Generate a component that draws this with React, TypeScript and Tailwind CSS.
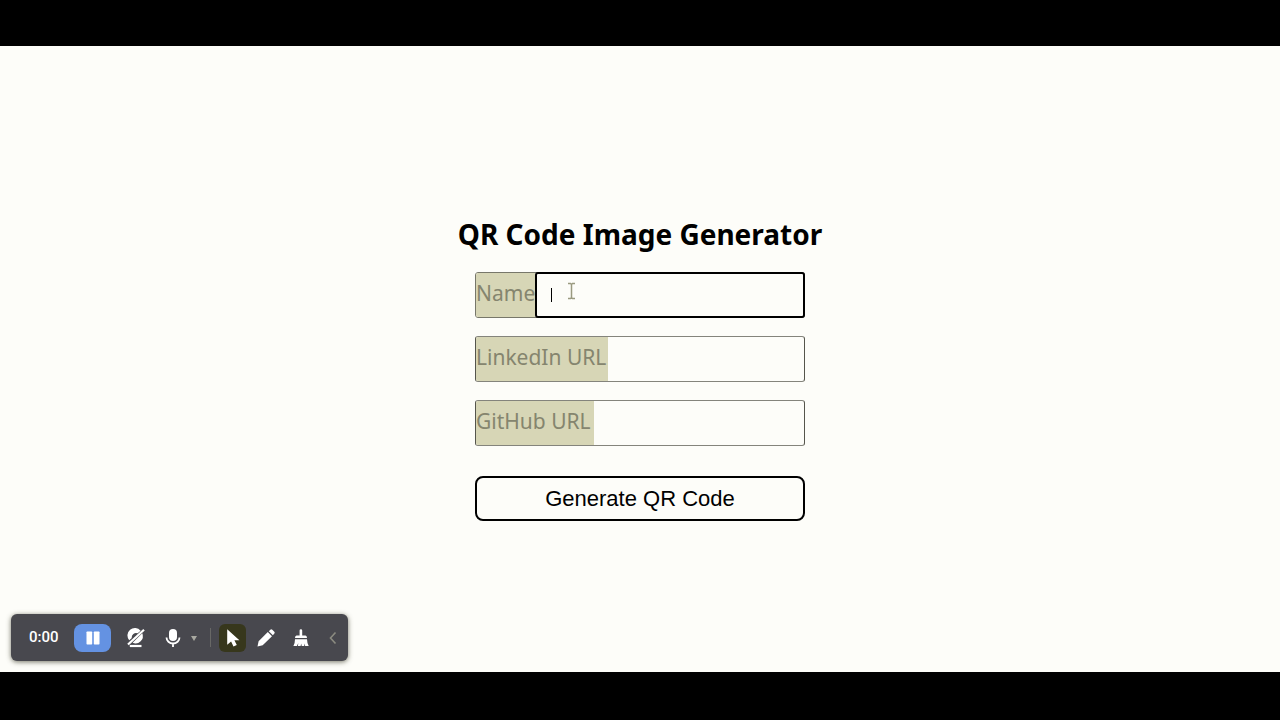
import { useState } from "react";

type FieldProps = {
  id: string;
  label: string;
  labelWidth: string;
  active?: boolean;
};

function Field({ id, label, labelWidth, active }: FieldProps) {
  const [value, setValue] = useState("");
  return (
    <div
      className={`flex h-[46px] rounded-[3px] border ${
        active ? "border-[#77776a]" : "border-[#84847c] border-x-[#55554c]"
      }`}
    >
      <label
        htmlFor={id}
        className={`flex shrink-0 items-center whitespace-nowrap rounded-l-xs bg-[#d7d6b6] pb-0.5 text-[21px] text-[#85856e] ${labelWidth}`}
      >
        {label}
      </label>
      <div className="relative -my-px -mr-px flex min-w-0 flex-1">
        <input
          id={id}
          type="text"
          value={value}
          onChange={(e) => setValue(e.target.value)}
          className={`w-full min-w-0 rounded-[3px] bg-transparent px-3 text-[22px] outline-none ${
            active ? "border-2 border-black" : ""
          }`}
        />
        {active && (
          <>
            <span className="absolute left-4 top-4 h-[14px] w-px bg-black" />
            <svg
              className="absolute left-8 top-[10px]"
              width="9"
              height="18"
              viewBox="0 0 9 18"
              fill="none"
              stroke="#9a9a80"
              strokeWidth="1.500"
              aria-hidden="true"
            >
              <path d="M1 1.5h2.5l1 1 1-1H8M1 16.5h2.5l1-1 1 1H8M4.500 2.500v13" />
            </svg>
          </>
        )}
      </div>
    </div>
  );
}

function Toolbar() {
  return (
    <div
      role="toolbar"
      aria-label="Recording controls"
      className="absolute bottom-[11px] left-[11px] flex h-[47px] w-[337px] items-center rounded-md bg-[#48484e] text-white shadow-[0_1px_5px_rgba(60,60,40,0.7)]"
    >
      <span className="ml-[18px] w-[45px] font-['Roboto',sans-serif] text-[15px] font-medium">
        0:00
      </span>
      <button
        aria-label="Pause"
        className="flex h-7 w-[37px] items-center justify-center rounded-lg bg-[#6492e2]"
      >
        <svg width="14" height="14" viewBox="0 0 14 14" fill="currentColor">
          <rect x="0.500" y="0.500" width="5.700" height="13" rx="0.700" />
          <rect x="7.800" y="0.500" width="5.700" height="13" rx="0.700" />
        </svg>
      </button>
      <button aria-label="Camera off" className="ml-4 w-[18px]">
        <svg width="18" height="20" viewBox="0 0 18 20" fill="none" stroke="currentColor">
          <path d="M13.600 2.700A7.400 7.400 0 0 0 2.200 12.300L4.800 10A4.300 4.300 0 0 1 10.700 5.300Z" fill="currentColor" stroke="none" />
          <path d="M15.300 5.200A7.400 7.400 0 0 1 5.600 14.800L15.300 5.200Z" fill="currentColor" stroke="none" />
          <path d="M1 16.500 17 1.800" strokeWidth="2.200" />
          <path d="M2.800 18h11.700" strokeWidth="2.200" />
        </svg>
      </button>
      <button aria-label="Microphone" className="ml-[20px] w-4">
        <svg width="16" height="20" viewBox="0 0 16 20" fill="none" stroke="currentColor" strokeWidth="1.800">
          <rect x="4" y="1" width="8" height="12" rx="4" fill="currentColor" stroke="none" />
          <path d="M1.500 9.500a6.500 6 0 0 0 13 0M8 15.500V19" />
        </svg>
      </button>
      <button aria-label="Microphone options" className="ml-[10px] w-[6px] text-[#a8a8a0]">
        <svg width="6" height="6" viewBox="0 0 6 6" fill="currentColor">
          <path d="M0 1h6L3 6Z" />
        </svg>
      </button>
      <span className="ml-[13px] h-[19px] w-px bg-[#686866]" />
      <button
        aria-label="Pointer"
        className="ml-2 flex h-7 w-[27px] items-center justify-center rounded-md bg-[#37371c]"
      >
        <svg width="14" height="20" viewBox="0 0 14 20" fill="currentColor">
          <path d="M1.200 1.200v15.600l3.900-3.200 2.400 4.900 3.300-1.500-2.400-4.700h5Z" />
        </svg>
      </button>
      <button aria-label="Pen" className="ml-[11px] w-[18px]">
        <svg width="18" height="18" viewBox="0 0 18 18" fill="currentColor">
          <path d="M0.500 17.500 1.600 12.300 10.800 3.100l4.200 4.200-9.300 9ZM11.800 2.200l1.500-1.400q1-.9 2 0l2 2q.8 1 0 1.800L15.900 6.200Z" />
        </svg>
      </button>
      <button aria-label="Clear drawing" className="ml-[18px] w-4">
        <svg width="16" height="18" viewBox="0 0 16 18" fill="currentColor">
          <path d="M6.600 1.500q0-1.200 1.300-1.200t1.300 1.200V6.500H12.500q1.500.3 1.500 2.500H2q0-2.200 1.500-2.500h3.100ZM2 10.200h12q.2 4.500 1.700 6.800h-3.500l-.7-2.500-.3 2.500H8.700l-.5-2.500-.6 2.500H4.900l.4-3-1.400 3H.4Q2 14 2 10.200Z" />
        </svg>
      </button>
      <button aria-label="Collapse" className="ml-[19px] w-[10px] text-[#8b8b80]">
        <svg width="10" height="14" viewBox="0 0 10 14" fill="none" stroke="currentColor" strokeWidth="1.600">
          <path d="M7.500 1.500 2.500 7l5 5.500" />
        </svg>
      </button>
    </div>
  );
}

export default function App() {
  return (
    <div className="flex h-screen flex-col bg-black font-['Noto_Sans',sans-serif]">
      <main className="relative mt-[46px] mb-12 flex flex-1 flex-col items-center justify-center bg-[#fdfdf9] pt-[15px] text-black">
        <Toolbar />
        <h1 className="mb-4 text-[28px] leading-[44px] font-bold whitespace-nowrap">
          QR Code Image Generator
        </h1>
        <form
          className="flex w-[330px] max-w-full flex-col gap-[18px]"
          onSubmit={(e) => e.preventDefault()}
        >
          <Field id="name" label="Name" labelWidth="w-[59px]" active />
          <Field id="linkedin" label="LinkedIn URL" labelWidth="w-[132px]" />
          <Field id="github" label="GitHub URL" labelWidth="w-[118px]" />
          <button
            type="submit"
            className="mt-3 h-[45px] rounded-lg border-2 border-black font-['Liberation_Sans',Arial,sans-serif] text-[22px]"
          >
            Generate QR Code
          </button>
        </form>
      </main>
    </div>
  );
}
